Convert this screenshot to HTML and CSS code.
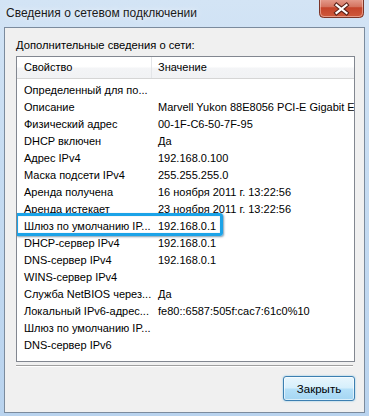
FILE: index.html
```html
<!DOCTYPE html>
<html lang="ru">
<head>
    <meta charset="UTF-8">
    <meta name="viewport" content="width=device-width, initial-scale=1.0">
    <title>Сведения о сетевом подключении</title>
    <link rel="stylesheet" href="styles.css">
</head>
<body>
    <div class="window">
        <div class="titlebar">
            <span class="title">Сведения о сетевом подключении</span>
            <button class="close-btn" title="Закрыть">
                <svg width="45" height="18" viewBox="0 0 45 18">
                    <defs>
                        <linearGradient id="red" x1="0" y1="0" x2="0" y2="1">
                            <stop offset="0" stop-color="#e8a496"/>
                            <stop offset="0.45" stop-color="#d4735f"/>
                            <stop offset="0.5" stop-color="#c5442b"/>
                            <stop offset="1" stop-color="#cf5a3c"/>
                        </linearGradient>
                    </defs>
                    <path d="M0.5 -2 V13.5 Q0.5 17.5 4.5 17.5 H40.5 Q44.5 17.5 44.5 13.5 V-2 Z" fill="url(#red)" stroke="#7b3528"/>
                    <path d="M1.5 -1 V13 Q1.5 16.5 5 16.5 H40 Q43.5 16.5 43.5 13 V-1" fill="none" stroke="rgba(255,220,210,0.5)"/>
                    <path d="M17.5 5 L27.5 13 M27.5 5 L17.5 13" stroke="#5a2118" stroke-width="4.2" stroke-linecap="square"/>
                    <path d="M17.5 5 L27.5 13 M27.5 5 L17.5 13" stroke="#ffffff" stroke-width="2.2" stroke-linecap="square"/>
                </svg>
            </button>
        </div>

        <div class="client">
            <div class="group-label">Дополнительные сведения о сети:</div>

            <div class="listview">
                <div class="lv-header">
                    <div class="col-name">Свойство</div>
                    <div class="col-value">Значение</div>
                </div>
                <div class="lv-rows">
                    <div class="row"><div class="col-name">Определенный для по...</div><div class="col-value"></div></div>
                    <div class="row"><div class="col-name">Описание</div><div class="col-value">Marvell Yukon 88E8056 PCI-E Gigabit Ethernet Controller</div></div>
                    <div class="row"><div class="col-name">Физический адрес</div><div class="col-value">00-1F-C6-50-7F-95</div></div>
                    <div class="row"><div class="col-name">DHCP включен</div><div class="col-value">Да</div></div>
                    <div class="row"><div class="col-name">Адрес IPv4</div><div class="col-value">192.168.0.100</div></div>
                    <div class="row"><div class="col-name">Маска подсети IPv4</div><div class="col-value">255.255.255.0</div></div>
                    <div class="row"><div class="col-name">Аренда получена</div><div class="col-value">16 ноября 2011 г. 13:22:56</div></div>
                    <div class="row"><div class="col-name">Аренда истекает</div><div class="col-value">23 ноября 2011 г. 13:22:56</div></div>
                    <div class="row"><div class="col-name">Шлюз по умолчанию IP...</div><div class="col-value">192.168.0.1</div></div>
                    <div class="row"><div class="col-name">DHCP-сервер IPv4</div><div class="col-value">192.168.0.1</div></div>
                    <div class="row"><div class="col-name">DNS-сервер IPv4</div><div class="col-value">192.168.0.1</div></div>
                    <div class="row"><div class="col-name">WINS-сервер IPv4</div><div class="col-value"></div></div>
                    <div class="row"><div class="col-name">Служба NetBIOS через...</div><div class="col-value">Да</div></div>
                    <div class="row"><div class="col-name">Локальный IPv6-адрес...</div><div class="col-value">fe80::6587:505f:cac7:61c0%10</div></div>
                    <div class="row"><div class="col-name">Шлюз по умолчанию IP...</div><div class="col-value"></div></div>
                    <div class="row"><div class="col-name">DNS-сервер IPv6</div><div class="col-value"></div></div>
                </div>
                <div class="highlight"></div>
            </div>

            <div class="separator"></div>

            <div class="actions">
                <button class="btn-default">Закрыть</button>
            </div>
        </div>
    </div>
</body>
</html>
```

FILE: styles.css
```css
html, body {
    margin: 0;
    padding: 0;
}
body {
    width: 369px;
    height: 416px;
    overflow: hidden;
    font-family: "Liberation Sans", Arial, sans-serif;
    font-size: 11px;
    color: #000;
    background: linear-gradient(to bottom, #d3e4f5 0%, #c6dcf2 40%, #b9d3ee 100%);
}
.window {
    height: 416px;
    display: flex;
    flex-direction: column;
}
.titlebar {
    height: 27px;
    display: flex;
    align-items: flex-start;
    padding-left: 6px;
    padding-right: 4px;
}
.title {
    margin-top: 5px;
    font-size: 12px;
    line-height: 17px;
    color: #1a1a1a;
    text-shadow: 0 0 6px rgba(255, 255, 255, 0.9);
}
.close-btn {
    margin-left: auto;
    margin-right: 1px;
    padding: 0;
    border: none;
    background: none;
    width: 45px;
    height: 18px;
    display: block;
}
.close-btn svg {
    display: block;
}
.client {
    margin: 0 4px 3px 4px;
    border: 1px solid #7b8b9d;
    background: #f0f0f0;
    padding: 10px 9px 11px 11px;
    display: flex;
    flex-direction: column;
}
.group-label {
    font-size: 11.2px;
    line-height: 15px;
    height: 15px;
    margin-bottom: 3px;
}
.listview {
    position: relative;
    height: 304px;
    border: 1px solid #828790;
    background: #fff;
    overflow: hidden;
}
.lv-header {
    display: flex;
    height: 21px;
    line-height: 21px;
    border-bottom: 1px solid #d5d5d5;
    background: linear-gradient(to bottom, #ffffff 0%, #ffffff 45%, #f3f4f6 55%, #f1f2f4 100%);
}
.lv-header .col-name {
    border-right: 1px solid #e3e5e8;
}
.col-name {
    width: 127px;
    flex: none;
    padding-left: 7px;
    white-space: nowrap;
    overflow: hidden;
}
.col-value {
    padding-left: 6px;
    white-space: nowrap;
}
.lv-rows {
    padding-top: 3px;
}
.row {
    display: flex;
    height: 17px;
    line-height: 17px;
    overflow: hidden;
}
.row .col-name {
    width: 128px;
}
.highlight {
    position: absolute;
    left: -2px;
    top: 156px;
    width: 202px;
    height: 17px;
    border: 3px solid #1ba3e8;
    border-radius: 3px;
    box-shadow: 1px 1px 2px rgba(0, 60, 100, 0.5), inset 0 0 1px rgba(0, 80, 140, 0.4);
}
.separator {
    margin-top: 3px;
    height: 1px;
    background: #a0a0a0;
    border-bottom: 1px solid #ffffff;
    margin-right: 2px;
}
.actions {
    display: flex;
    justify-content: flex-end;
    margin-top: 9px;
}
.btn-default {
    width: 72px;
    height: 25px;
    padding: 0;
    font-family: inherit;
    font-size: 11.5px;
    color: #000;
    border: 1px solid #3c7fb1;
    border-radius: 3px;
    background: linear-gradient(to bottom, #e8f6fd 0%, #d6effc 48%, #b5e0f8 52%, #a4d6f3 100%);
    box-shadow: inset 0 0 0 1px rgba(255, 255, 255, 0.6), 0 0 2px rgba(80, 180, 230, 0.7);
}
```
